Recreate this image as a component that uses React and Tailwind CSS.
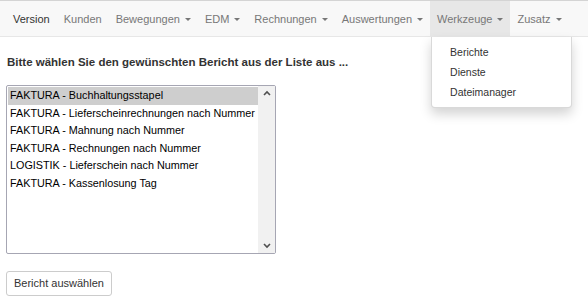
import { useState } from 'react';

const navItems = [
  { label: 'Version', caret: false, dark: true },
  { label: 'Kunden', caret: false },
  { label: 'Bewegungen', caret: true },
  { label: 'EDM', caret: true },
  { label: 'Rechnungen', caret: true },
  { label: 'Auswertungen', caret: true },
  { label: 'Werkzeuge', caret: true, open: true },
  { label: 'Zusatz', caret: true },
];

const reports = [
  'FAKTURA - Buchhaltungsstapel',
  'FAKTURA - Lieferscheinrechnungen nach Nummer',
  'FAKTURA - Mahnung nach Nummer',
  'FAKTURA - Rechnungen nach Nummer',
  'LOGISTIK - Lieferschein nach Nummer',
  'FAKTURA - Kassenlosung Tag',
];

function Caret() {
  return <span className="ml-[5px] inline-block w-0 h-0 border-x-[3px] border-x-transparent border-t-[3px] border-t-current align-middle" />;
}

export default function App() {
  const [selected, setSelected] = useState(0);

  return (
    <div className="min-h-[307px] bg-white text-[11px] text-[#333] font-['Liberation_Sans',Arial,sans-serif]">
      <nav className="border-t border-[#d4d4d4] border-b border-b-[#e7e7e7] bg-[#f8f8f8] h-[37px] flex px-[6px]">
        {navItems.map((item) => (
          <div key={item.label} className="relative">
            <a
              className={`h-[36px] px-[7px] flex items-center cursor-pointer ${item.dark ? 'text-[#333]' : 'text-[#777]'} ${item.open ? 'bg-[#e7e7e7] text-[#555]' : ''}`}
            >
              {item.label}
              {item.caret && <Caret />}
            </a>
            {item.open && (
              <ul className="absolute left-[1px] top-[36px] w-[141px] bg-white border border-black/15 border-t-0 rounded-b-[4px] shadow-[0_6px_12px_rgba(0,0,0,0.175)] py-[5px] z-10">
                {['Berichte', 'Dienste', 'Dateimanager'].map((d) => (
                  <li key={d} className="h-[20px] leading-[20px] pl-[18px] text-[10.5px] text-[#333]">{d}</li>
                ))}
              </ul>
            )}
          </div>
        ))}
      </nav>

      <div className="px-[6px]">
        <p className="mt-[17px] pl-[1px] font-bold text-[11.5px] leading-[17px]">Bitte wählen Sie den gewünschten Bericht aus der Liste aus ...</p>

        <div className="mt-[14px] w-[270px] h-[169px] border border-[#a6a6b3] rounded-[2px] flex">
          <div className="flex-1 pt-[1px] pl-[1px] text-black text-[10.8px]">
            {reports.map((r, i) => (
              <div
                key={r}
                onClick={() => setSelected(i)}
                className={`h-[17.5px] leading-[17.5px] pl-[2px] whitespace-nowrap ${selected === i ? 'bg-[#cecece]' : ''}`}
              >
                {r}
              </div>
            ))}
          </div>
          <div className="w-[17px] bg-[#f1f1f1] flex flex-col justify-between items-center py-[4px]">
            <svg width="8" height="6" viewBox="0 0 8 6"><path d="M1 5 L4 2 L7 5" fill="none" stroke="#505050" strokeWidth="1.6" /></svg>
            <svg width="8" height="6" viewBox="0 0 8 6"><path d="M1 1 L4 4 L7 1" fill="none" stroke="#505050" strokeWidth="1.6" /></svg>
          </div>
        </div>

        <button className="mt-[17px] h-[25px] px-[7px] border border-[#ccc] rounded-[3px] bg-white text-[#333]">
          Bericht auswählen
        </button>
      </div>
    </div>
  );
}
